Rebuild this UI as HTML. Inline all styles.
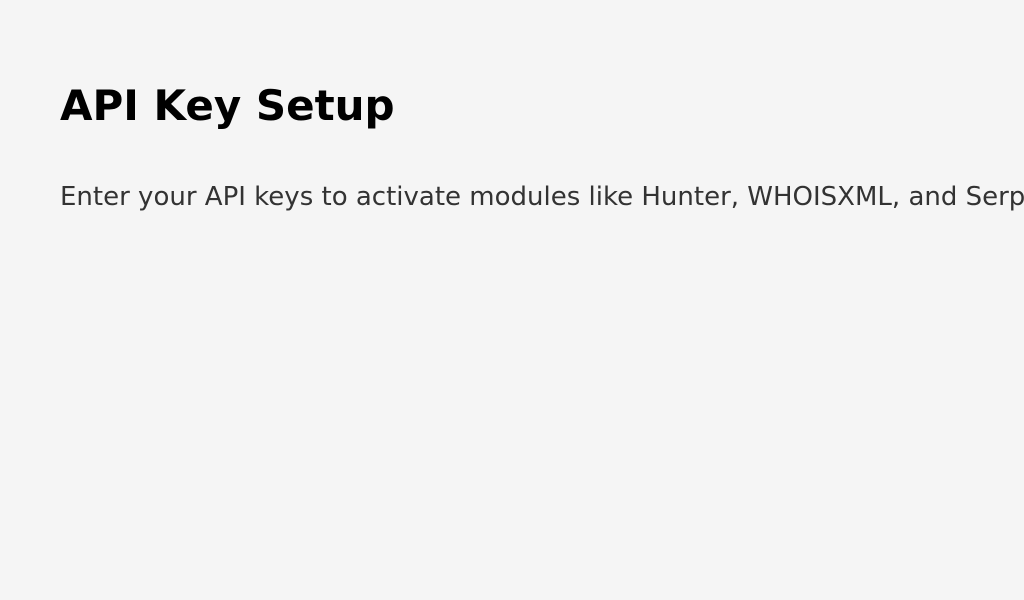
<!DOCTYPE html>
<html><head><meta charset="utf-8"><style>
html,body{margin:0;padding:0;width:1024px;height:600px;overflow:hidden;background:#f5f5f5;font-family:"DejaVu Sans","Liberation Sans",sans-serif;}
.t{position:absolute;left:60px;top:85px;font-size:42px;line-height:42px;font-weight:bold;color:#000;white-space:nowrap;}
.s{position:absolute;left:60px;top:184px;font-size:26px;line-height:26px;color:#333;white-space:nowrap;}
</style></head><body>
<div class="t">API Key Setup</div>
<div class="s">Enter your API keys to activate modules like Hunter, WHOISXML, and SerpAPI.</div>
</body></html>
